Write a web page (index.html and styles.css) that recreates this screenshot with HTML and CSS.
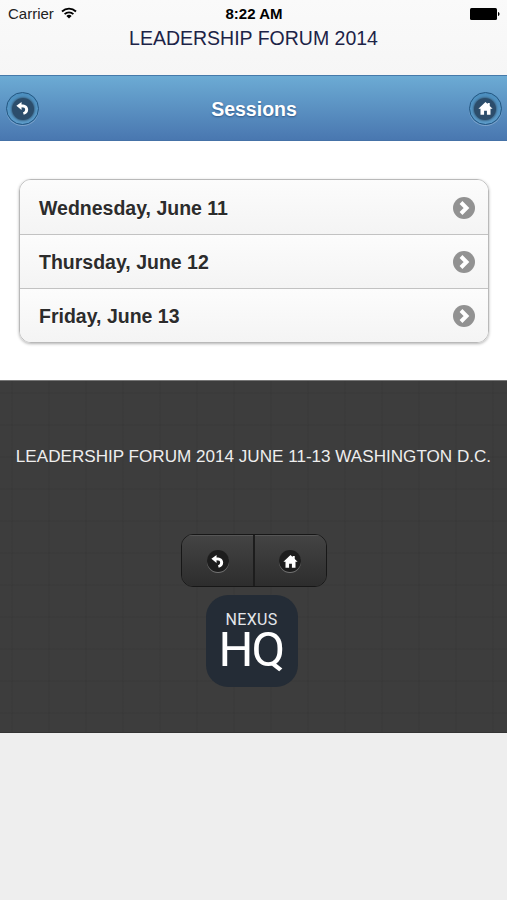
FILE: index.html
```
<!DOCTYPE html>
<html lang="en">
<head>
    <meta charset="UTF-8">
    <meta name="viewport" content="width=device-width, initial-scale=1.0">
    <title>Sessions</title>
    <link rel="stylesheet" href="styles.css">
</head>
<body>
    <svg class="symbols">
        <symbol id="back" viewBox="0 0 18 18">
            <path d="M2.500 6.200 8 2V4.700c4.300 0 7 2.100 7 5.300 0 2.900-1.800 4.900-4.700 5.600l-.8-2.700c1.500-.4 2.300-1.400 2.300-2.700 0-1.500-1.200-2.400-3.800-2.400V10.500z"/>
        </symbol>
        <symbol id="home" viewBox="0 0 18 18">
            <path d="M9 2 1.500 9.300h2.200V15.500h3.800v-4h3v4h3.800V9.300h2.200L13.500 6.400V3.300h-2.200v1z"/>
        </symbol>
    </svg>
    <div class="top">
        <div class="status">
            <div class="carrier">
                <span>Carrier</span>
                <svg class="wifi" viewBox="0 0 16 12">
                    <path d="M1 4.500C5 .6 11 .6 15 4.500M3.600 7.100c2.500-2.400 6.300-2.400 8.800 0"/>
                    <path class="dot" d="M5.400 8.900c1.500-1.400 3.700-1.400 5.200 0L8 11.500z"/>
                </svg>
            </div>
            <div class="time">8:22 AM</div>
            <svg class="battery" viewBox="0 0 30 12">
                <rect x="0" y="0" width="27" height="12" rx="1.500"/>
                <path d="M28 4c2 .5 2 3.500 0 4z"/>
            </svg>
        </div>
        <div class="forum">LEADERSHIP FORUM 2014</div>
    </div>
    <div class="header">
        <a class="round" href="#"><span class="disc"><svg><use href="#back"/></svg></span></a>
        <h1>Sessions</h1>
        <a class="round" href="#"><span class="disc"><svg><use href="#home"/></svg></span></a>
    </div>
    <div class="content">
        <ul class="list">
            <li><a href="#">Wednesday, June 11</a><svg class="arrow" viewBox="0 0 22 22"><circle cx="11" cy="11" r="11"/><path d="m8 5.500 5.500 5.500-5.500 5.500"/></svg></li>
            <li><a href="#">Thursday, June 12</a><svg class="arrow" viewBox="0 0 22 22"><circle cx="11" cy="11" r="11"/><path d="m8 5.500 5.500 5.500-5.500 5.500"/></svg></li>
            <li><a href="#">Friday, June 13</a><svg class="arrow" viewBox="0 0 22 22"><circle cx="11" cy="11" r="11"/><path d="m8 5.500 5.500 5.500-5.500 5.500"/></svg></li>
        </ul>
    </div>
    <div class="footer">
        <p>LEADERSHIP FORUM 2014 JUNE 11-13 WASHINGTON D.C.</p>
        <div class="buttons">
            <a href="#"><span class="disc dark"><svg><use href="#back"/></svg></span></a>
            <a href="#"><span class="disc dark"><svg><use href="#home"/></svg></span></a>
        </div>
        <div class="logo">
            <span class="nexus">NEXUS</span>
            <span class="hq">HQ</span>
        </div>
    </div>
</body>
</html>
```
FILE: styles.css
```
* {
    margin: 0;
    padding: 0;
    box-sizing: border-box;
}
body {
    background: #eee;
    font-family: "Liberation Sans", Arial, sans-serif;
    min-height: 900px;
}
a {
    color: inherit;
    text-decoration: none;
}
.symbols {
    display: none;
}
.top {
    height: 75px;
    background: linear-gradient(#fafafa, #f6f6f6);
}
.status {
    height: 27px;
    padding: 0 7px 0 8px;
    display: grid;
    grid-template-columns: 1fr auto 1fr;
    align-items: center;
    font-size: 15px;
    color: #000;
}
.carrier {
    display: flex;
    align-items: center;
    gap: 7px;
    color: #222;
}
.wifi {
    width: 16px;
    height: 12px;
    fill: none;
    stroke: #000;
    stroke-width: 1.8;
    margin-top: -1px;
}
.wifi .dot {
    fill: #000;
    stroke: none;
}
.time {
    font-weight: bold;
    font-size: 15px;
}
.battery {
    width: 30px;
    height: 12px;
    justify-self: end;
}
.forum {
    height: 22px;
    line-height: 22px;
    text-align: center;
    font-size: 19.5px;
    color: #1c2347;
}
.header {
    height: 66px;
    padding: 1px 5px 0 6px;
    display: flex;
    align-items: center;
    justify-content: space-between;
    background: linear-gradient(#6cabd4, #4977b0);
    border-top: 1px solid #467aaa;
    border-bottom: 1px solid #4572a7;
}
.header h1 {
    font-size: 19.5px;
    line-height: 22px;
    padding-top: 1px;
    color: #fff;
    text-shadow: 0 1px 2px #2f5988;
}
.round {
    width: 33px;
    height: 33px;
    border: 1.5px solid #225681;
    border-radius: 50%;
    background: linear-gradient(#4c8fbf, #5d9cca);
    box-shadow: 0 1px 0 rgba(255, 255, 255, .25);
    display: flex;
    align-items: center;
    justify-content: center;
}
.disc {
    width: 22px;
    height: 22px;
    border-radius: 50%;
    background: #2c4d6b;
    box-shadow: 0 0 2px 1px #3c6788;
    display: flex;
    align-items: center;
    justify-content: center;
}
.disc svg {
    width: 17px;
    height: 17px;
    fill: #fff;
}
.disc.dark {
    background: #1d1d1d;
    box-shadow: 0 1px 0 #747474;
}
.content {
    height: 239px;
    padding: 38px 18px 0 19px;
    background: #fff;
}
.list {
    list-style: none;
    border: 1px solid #b9b9b9;
    border-radius: 12px;
    box-shadow: 0 1px 3px rgba(0, 0, 0, .3);
    overflow: hidden;
}
.list li {
    height: 54px;
    padding: 1px 13px 0 19px;
    display: flex;
    align-items: center;
    justify-content: space-between;
    background: linear-gradient(#fcfcfc, #f4f4f4);
    border-bottom: 1px solid #c2c2c2;
    font-size: 19.5px;
    font-weight: bold;
    color: #2c2c2c;
    text-shadow: 0 1px 0 #fff;
}
.list li a {
    line-height: 22px;
}
.list li:first-child {
    height: 55px;
}
.list li:last-child {
    height: 53px;
    border-bottom: 0;
}
.arrow {
    width: 22px;
    height: 22px;
}
.arrow circle {
    fill: #929292;
}
.arrow path {
    fill: none;
    stroke: #fff;
    stroke-width: 4;
}
.footer {
    height: 353px;
    padding-top: 65px;
    display: flex;
    flex-direction: column;
    align-items: center;
    background-color: #3d3d3d;
    background-image:
        repeating-linear-gradient(90deg, transparent 0 11px, rgba(0, 0, 0, .03) 11px 13px, transparent 13px 37px),
        repeating-linear-gradient(transparent 0 11px, rgba(0, 0, 0, .03) 11px 13px, transparent 13px 32px);
    border-top: 1px solid #777;
    border-bottom: 1px solid #333;
    color: #eee;
}
.footer p {
    height: 22px;
    line-height: 22px;
    font-size: 17.1px;
    white-space: nowrap;
}
.buttons {
    width: 146px;
    height: 53px;
    margin-top: 66px;
    display: flex;
    border: 1.5px solid #171717;
    border-radius: 12px;
    overflow: hidden;
}
.buttons a {
    flex: 1;
    display: flex;
    align-items: center;
    justify-content: center;
    padding: 1px 0 0 1px;
    background: linear-gradient(#444, #2d2d2d);
    box-shadow: inset 0 1px 0 #565656;
}
.buttons a + a {
    padding-left: 0;
    border-left: 2px solid #1d1d1d;
}
.logo {
    width: 92px;
    height: 92px;
    margin-top: 8px;
    margin-right: 4px;
    padding-top: 15px;
    border-radius: 22px;
    background: #242c36;
    color: #fff;
    font-family: Roboto, sans-serif;
    display: flex;
    flex-direction: column;
    align-items: center;
}
.nexus {
    font-size: 16px;
    line-height: 19px;
    letter-spacing: .3px;
    color: #e3e6ea;
}
.hq {
    font-size: 49px;
    line-height: 42px;
    letter-spacing: -1.8px;
    margin-right: 1px;
}
```
